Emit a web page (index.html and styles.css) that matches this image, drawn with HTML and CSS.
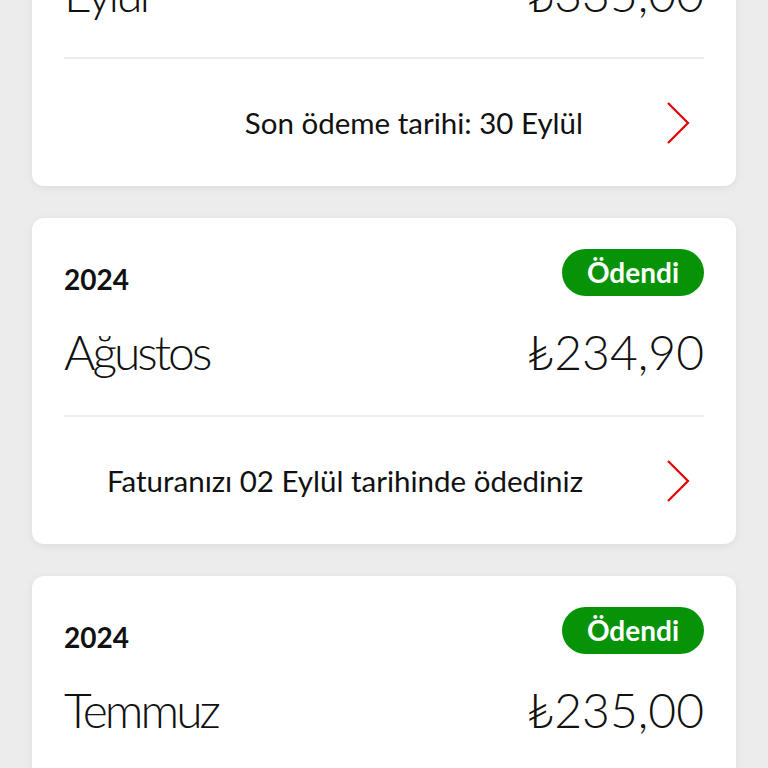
FILE: index.html
```html
<!DOCTYPE html>
<html lang="tr">
<head>
<meta charset="utf-8">
<link rel="stylesheet" href="styles.css">
</head>
<body>
<main class="list">
  <section class="card">
    <div class="head">
      <span class="year">2024</span>
    </div>
    <div class="row">
      <span class="month">Eylül</span>
      <span class="amount">₺335,00</span>
    </div>
    <div class="foot">
      <span class="note">Son ödeme tarihi: 30 Eylül</span>
      <svg class="chev" viewBox="0 0 24 44" width="24" height="44"><path d="M2 2 L22 22 L2 42" fill="none" stroke="#e60000" stroke-width="2.2"/></svg>
    </div>
  </section>
  <section class="card">
    <div class="head">
      <span class="year">2024</span>
      <span class="badge">Ödendi</span>
    </div>
    <div class="row">
      <span class="month">Ağustos</span>
      <span class="amount">₺234,90</span>
    </div>
    <div class="foot">
      <span class="note">Faturanızı 02 Eylül tarihinde ödediniz</span>
      <svg class="chev" viewBox="0 0 24 44" width="24" height="44"><path d="M2 2 L22 22 L2 42" fill="none" stroke="#e60000" stroke-width="2.2"/></svg>
    </div>
  </section>
  <section class="card">
    <div class="head">
      <span class="year">2024</span>
      <span class="badge">Ödendi</span>
    </div>
    <div class="row">
      <span class="month">Temmuz</span>
      <span class="amount">₺235,00</span>
    </div>
    <div class="foot">
      <span class="note">Faturanızı 02 Ağustos tarihinde ödediniz</span>
      <svg class="chev" viewBox="0 0 24 44" width="24" height="44"><path d="M2 2 L22 22 L2 42" fill="none" stroke="#e60000" stroke-width="2.2"/></svg>
    </div>
  </section>
</main>
</body>
</html>
```

FILE: styles.css
```css
html, body {
  margin: 0;
  padding: 0;
  background: #ececec;
  height: 768px;
  overflow: hidden;
}

body {
  font-family: Lato, "Open Sans", sans-serif;
  color: #111;
}

.list {
  display: flex;
  flex-direction: column;
  gap: 32px;
  padding: 0 32px;
  margin-top: -140px;
}

.card {
  background: #fff;
  border-radius: 12px;
  box-shadow: 0 2px 8px rgba(0, 0, 0, 0.07);
  padding: 31px 32px 0;
  display: flex;
  flex-direction: column;
}

.head {
  display: flex;
  justify-content: space-between;
  align-items: flex-end;
  min-height: 47px;
}

.year {
  font-weight: 700;
  font-size: 28px;
  line-height: 34px;
}

.badge {
  background: #079307;
  color: #fff;
  font-weight: 700;
  font-size: 28px;
  line-height: 47px;
  height: 47px;
  padding: 0 25px;
  border-radius: 24px;
}

.row {
  display: flex;
  justify-content: space-between;
  align-items: center;
  margin-top: 28px;
  height: 56px;
  padding-bottom: 35px;
  border-bottom: 2px solid #ececec;
}

.month, .amount {
  font-weight: 300;
  font-size: 48px;
  line-height: 56px;
}

.month {
  letter-spacing: -3px;
}

.foot {
  height: 127px;
  display: flex;
  align-items: center;
  justify-content: flex-end;
}

.note {
  font-size: 29.5px;
  margin-right: 83px;
}

.chev {
  display: block;
  margin-right: 14px;
}
```
